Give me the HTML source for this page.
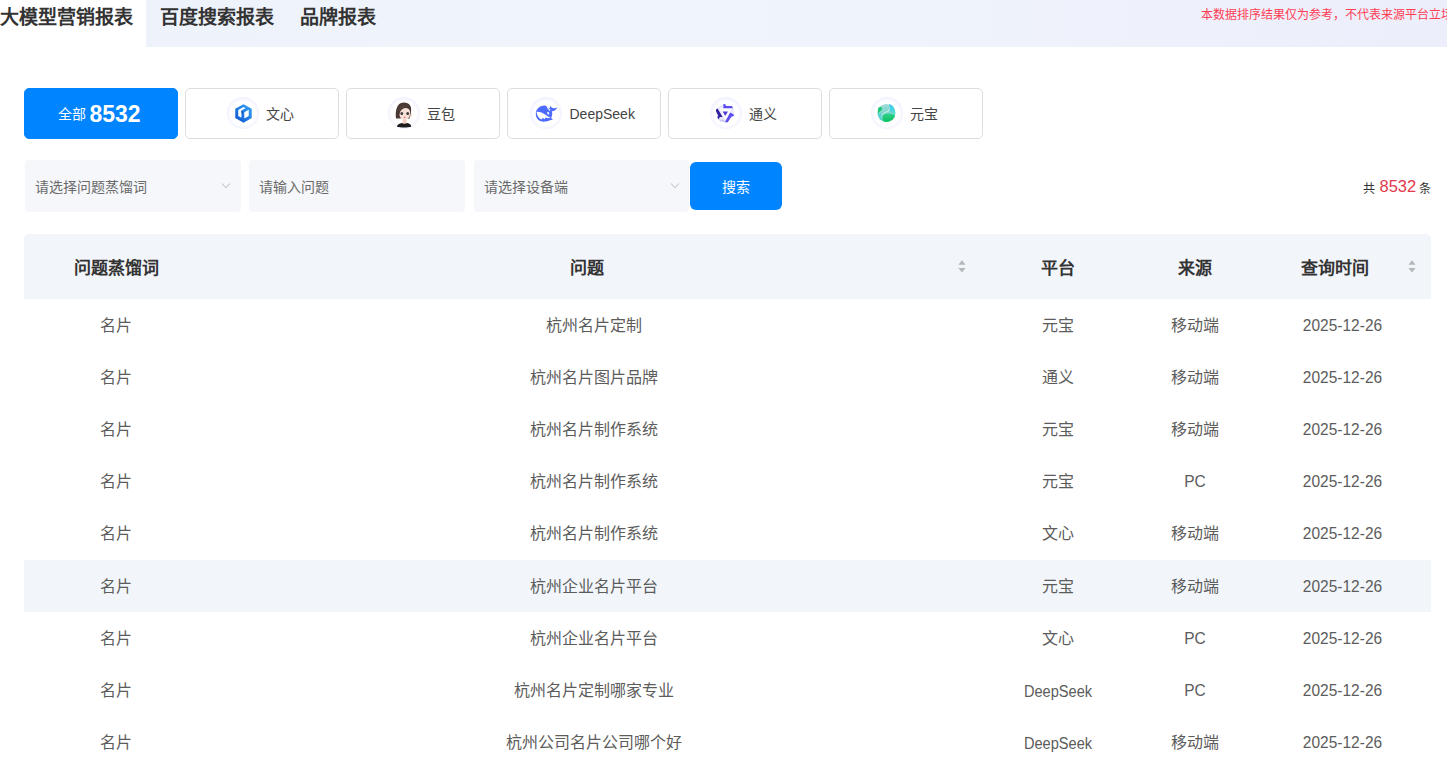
<!DOCTYPE html>
<html lang="zh-CN">
<head>
<meta charset="utf-8">
<style>
*{margin:0;padding:0;box-sizing:border-box;}
html,body{width:1447px;height:777px;overflow:hidden;background:#fff;}
body{font-family:"Liberation Sans",sans-serif;color:#333;position:relative;}
.topbar{position:absolute;left:146px;top:0;width:1301px;height:47px;background:linear-gradient(90deg,#eef2fa 0%,#f0f4fb 35%,#eff3fb 60%,#eceffb 100%);}
.tt{position:absolute;top:4.5px;font-size:19px;font-weight:bold;color:#333;line-height:26px;white-space:nowrap;}
.notice{position:absolute;left:1201px;top:6px;font-size:12px;color:#ff3d55;line-height:18px;white-space:nowrap;}
.tab{position:absolute;top:88px;width:154px;height:51px;border:1px solid #dedede;border-radius:5px;background:#fff;}
.tab.active{background:#0084ff;border-color:#0084ff;}
.ic{position:absolute;top:8px;width:32px;height:32px;border-radius:50%;background:radial-gradient(circle at 50% 51.5%,#fff 0,#fff 54%,#eff1ff 70%,#e6e9fd 84%,#edf0fe 93%,rgba(255,255,255,0) 100%);}
.logo{position:absolute;}
.lb{position:absolute;top:14px;font-size:14px;line-height:22px;color:#444;white-space:nowrap;}
.lb.la{font-size:14px;color:#444;transform-origin:0 50%;transform:scaleY(1.1);}
.sel{position:absolute;top:160px;height:52px;background:#f5f7fa;border-radius:4px;}
.ph{position:absolute;left:10px;top:16px;font-size:14px;line-height:22px;color:#6a6a6a;white-space:nowrap;}
.arr{position:absolute;top:182px;}
.btn{position:absolute;left:690px;top:162px;width:92px;height:48px;background:#0084ff;border-radius:6px;color:#fff;font-size:14px;line-height:22px;text-align:center;padding-top:14px;}
.total{position:absolute;left:1363px;top:178px;font-size:12px;line-height:22px;color:#333;white-space:nowrap;}
.total.n{color:#e0384c;font-size:16.5px;}
.thead{position:absolute;left:24px;top:234px;width:1407px;height:65px;background:#f2f5fa;border-radius:5px 5px 0 0;}
.row{position:absolute;left:24px;width:1407px;height:52.1px;}
.row.hov{background:#f2f6fa;}
.c{position:absolute;height:100%;text-align:center;white-space:nowrap;}
.thead .c{top:2px;font-size:17px;font-weight:bold;line-height:65px;color:#333;}
.row .c{top:1px;font-size:16px;line-height:52px;color:#5c5c5c;}
.row .la{font-size:15.5px;color:#5c5c5c;display:inline-block;transform:scaleY(1.08);}
.row .ds{font-size:14.6px;transform:scaleY(1.12);}
.c1{left:0;width:184px;}
.c2{left:184px;width:772px;}
.c3{left:956px;width:156px;}
.c4{left:1112px;width:118px;}
.c5{left:1230px;width:177px;}
.sorter{position:absolute;top:260px;}
</style>
</head>
<body>
<div class="topbar"></div>
<div class="tt" style="left:0;">大模型营销报表</div>
<div class="tt" style="left:160px;">百度搜索报表</div>
<div class="tt" style="left:300px;">品牌报表</div>
<div class="notice">本数据排序结果仅为参考，不代表来源平台立场</div>

<div class="tab active" style="left:24px;"></div>
<div class="abs" style="position:absolute;left:58px;top:104px;font-size:14px;line-height:20px;color:#fff;white-space:nowrap;">全部</div>
<div class="abs" style="position:absolute;left:89.5px;top:100px;font-size:23px;font-weight:bold;line-height:28px;color:#fff;white-space:nowrap;">8532</div>

<div class="tab" style="left:185px;"><div class="ic" style="left:41px;"><svg class="logo" style="left:7.5px;top:7px;" width="17" height="19" viewBox="0 0 34 38">
<defs><linearGradient id="wxg" x1="1" y1="0" x2="0" y2="1"><stop offset="0" stop-color="#3aa8f8"/><stop offset="1" stop-color="#0b52cf"/></linearGradient></defs>
<path d="M17 0.5 L33.5 9.5 L33.5 28 L17 37.5 L0.5 28 L0.5 9.5 Z" fill="url(#wxg)"/>
<path d="M6.5 12 L17 6.2 L21 8.4 L12.8 13 L12.8 27.6 L6.5 24.2 Z" fill="#fff"/>
<path d="M18.6 16.5 L27.5 11.6 L27.5 24.2 L18.6 29.2 Z" fill="#fff"/>
<path d="M12.8 13.5 L16 15.2 L16 19 L12.8 17.2 Z" fill="#0a3aa0" opacity="0.8"/>
</svg></div><div class="lb" style="left:80px;">文心</div></div>
<div class="tab" style="left:346px;"><div class="ic" style="left:41px;"><svg class="logo" style="left:-4px;top:-4px;" width="40" height="40" viewBox="0 0 40 40">
<path d="M12 25.6 C11.2 18.6 12.4 9.6 19.6 9.6 C25.8 9.6 27.8 13.6 27 18.6 L26.6 22 L25.2 25.8 L21 25 L15 25.6 Z" fill="#4a3834"/>
<path d="M15.4 18 C15.8 14.8 18.4 13.4 21 13.4 C23.8 13.4 25.9 15.4 26 19.2 C26.2 23 25 26.4 20.8 27.2 C17.6 26.8 15.6 24.6 15.4 21.6 Z" fill="#f8e0d9"/>
<path d="M14.4 21 C14.6 16.4 17.2 13 21.6 13 C24.8 13.2 26.6 15 26.8 18.4 C25.8 16.2 24 14.9 21.6 14.9 C18.4 15.1 16 17.6 15.4 21.6 Z" fill="#4a3834"/>
<ellipse cx="27.2" cy="22.2" rx="0.8" ry="1.2" fill="#f2cfc6"/>
<ellipse cx="17.8" cy="20.4" rx="1.4" ry="1.5" fill="#3a3a3a"/>
<ellipse cx="23.7" cy="20.5" rx="1.4" ry="1.5" fill="#3a3a3a"/>
<ellipse cx="20.7" cy="24.3" rx="1.1" ry="0.6" fill="#e8706e"/>
<path d="M18.6 26.4 L22.6 26.4 L22.8 31 L18.4 31 Z" fill="#f2d0c6"/>
<path d="M13 33.8 C13 31.4 15.4 30.4 18 30 C19 31 22 31 23.2 30 C25.6 30.4 27.2 31.4 27.2 33.8 C24 34.8 16 34.8 13 33.8 Z" fill="#1c1c1e"/>
</svg></div><div class="lb" style="left:80px;">豆包</div></div>
<div class="tab" style="left:507px;"><div class="ic" style="left:22px;"><svg class="logo" style="left:-4px;top:-4px;" width="40" height="40" viewBox="0 0 40 40">
<path d="M9.8 21 C9.8 16.2 13.4 12.8 18.4 12.6 C19.4 12.6 20.2 12.8 20.8 13.2 L22.4 14.6 C24.6 15.4 26 17.4 26.2 19.8 C26.4 21.8 25.8 23.6 25.2 25 L26.9 26.8 L24.6 27 C22.6 28.2 20 28.7 17.6 28.7 C13 28.7 9.8 25.4 9.8 21 Z" fill="#4d6bfe"/>
<path d="M23.4 17.6 C24 15.8 24 14.2 24.3 12.8 C25.4 14.6 26.6 15.4 28 15.3 C29 15.2 30.2 14.9 31.1 14.4 C30.6 16.2 29 17.6 26.8 18.2 Z" fill="#4d6bfe"/>
<path d="M10.5 18.9 C13.6 18.6 16.6 19.8 19.4 21.8 C21.2 23.1 22.8 24.1 24.6 24.7 L21.6 25.3 L19.6 24.4 L18.4 26.2 L16.8 24.8 L15.6 26.6 C13 25.4 10.9 22.6 10.5 18.9 Z" fill="#fff"/>
<ellipse cx="22.2" cy="20.2" rx="0.9" ry="1.4" transform="rotate(-30 22.2 20.2)" fill="#fff"/>
<path d="M20.4 12.8 C21 14.8 22.2 16.6 23.6 17.8 L24.6 17.2 C23.2 16 22.2 14.6 21.6 13.2 Z" fill="#fff"/>
</svg></div><div class="lb la" style="left:61.5px;top:13px;">DeepSeek</div></div>
<div class="tab" style="left:668px;"><div class="ic" style="left:41px;"><svg class="logo" style="left:-3.2px;top:-4px;" width="40" height="40" viewBox="0 0 40 40">
<path d="M16.4 11 L19.1 13 L24.8 13.1 L26.2 15.3 L27.4 21.9 L25.6 23.4 L20.2 29.2 L18.3 29.2 L16.7 26.8 L11.7 26.5 L10.2 24.1 L9 16.4 L10.4 15.5 L13.6 12.6 Z" fill="#e9e7fd"/>
<path d="M12.8 15.3 L25.4 15.3 L18.4 27 Z" fill="#fff"/>
<path d="M16.4 11 L18.3 11.2 L19.1 13 L24.8 13.1 L26.2 15.3 L16.4 15.3 Z" fill="#5b4cf2"/>
<path d="M9 16.4 L10.5 15.5 L15.6 23.9 L12.7 23.9 L11.8 26.4 L10.2 24.1 L11.4 23 L9 18.2 Z" fill="#2e1f9e"/>
<path d="M23.2 19.4 L27.3 21.9 L25.8 23.4 L24.4 23.6 L20.8 29.2 L17.9 29.2 Z" fill="#5b4cf2"/>
<path d="M11.8 26.4 L16.8 26.8 L18.4 29.2 L13.2 28.2 Z" fill="#c9c3f6"/>
<path d="M15.6 18.4 L21 18.4 L18.3 23 Z" fill="#4b3bd8"/>
</svg></div><div class="lb" style="left:80px;">通义</div></div>
<div class="tab" style="left:829px;"><div class="ic" style="left:41px;"><svg class="logo" style="left:-3px;top:-4px;" width="40" height="40" viewBox="0 0 40 40">
<defs>
<linearGradient id="ybg" x1="0.3" y1="0" x2="0.5" y2="1"><stop offset="0" stop-color="#a6dad8"/><stop offset="0.55" stop-color="#78d8cb"/><stop offset="1" stop-color="#3acd98"/></linearGradient>
<linearGradient id="ybc" x1="0" y1="0" x2="0.4" y2="1"><stop offset="0" stop-color="#30c4f6"/><stop offset="1" stop-color="#5fe0cf"/></linearGradient>
<linearGradient id="ybd" x1="0" y1="0" x2="0" y2="1"><stop offset="0" stop-color="#2fd08a"/><stop offset="1" stop-color="#0cc25f"/></linearGradient>
</defs>
<circle cx="18.3" cy="19.9" r="9" fill="url(#ybg)"/>
<path d="M21 11.1 C25 12 27.3 15.6 27.3 19.9 C27.3 21.2 27 22.2 26.6 23 C25.8 20.6 23.8 18.8 20.6 17.8 C22 15.8 22.2 13 21 11.1 Z" fill="url(#ybc)"/>
<path d="M10 21 C10.6 24 12 26.4 14.4 27.8 C13.4 25.6 13 23 13.4 21 Z" fill="#4fcde0" opacity="0.8"/>
<path d="M15.2 22.6 C16 21 18 20.4 20.2 20.8 C23 21.2 25.8 21.4 27.1 22.6 C26.4 26.2 22.8 28.9 18.3 28.9 C16.8 28.9 15.8 28.2 15.3 27.4 C14.6 25.8 14.6 23.8 15.2 22.6 Z" fill="url(#ybd)"/>
<path d="M10.6 14.6 C11.8 13.4 13.6 13.8 14 15.2 C14.3 16.4 13.6 17.2 12.8 17.8 C12 18.4 11.2 19.2 10.4 20.6 C9.6 19.2 9.8 16 10.6 14.6 Z" fill="#1bc872"/>
<path d="M21.2 13.2 C22 15.6 21 17.6 18.4 18.6 C16.2 19.4 14.2 20.6 13.4 22.6 C13 24 13.4 26 14.4 27.6 C13.2 25.2 13.2 22.6 14.8 21.2 C16 20.2 17.6 19.6 19.4 19 C21.8 18.2 22.8 16 21.2 13.2 Z" fill="#e2f6f1" opacity="0.85"/>
</svg></div><div class="lb" style="left:80px;">元宝</div></div>

<div class="sel" style="left:25px;width:216px;"><div class="ph">请选择问题蒸馏词</div></div>
<svg class="arr" style="left:221px;" width="10" height="8" viewBox="0 0 10 8"><path d="M1 1.5 L5 5.8 L9 1.5" fill="none" stroke="#c3c6cc" stroke-width="1.1"/></svg>
<div class="sel" style="left:249px;width:216px;"><div class="ph">请输入问题</div></div>
<div class="sel" style="left:474px;width:215px;"><div class="ph">请选择设备端</div></div>
<svg class="arr" style="left:670px;" width="10" height="8" viewBox="0 0 10 8"><path d="M1 1.5 L5 5.8 L9 1.5" fill="none" stroke="#c3c6cc" stroke-width="1.1"/></svg>
<div class="btn">搜索</div>
<div class="total" style="left:1363px;">共</div><div class="total n" style="left:1379.5px;top:174.5px;">8532</div><div class="total" style="left:1419px;">条</div>

<div class="thead">
  <div class="c c1">问题蒸馏词</div>
  <div class="c c2" style="left:177px;">问题</div>
  <div class="c c3">平台</div>
  <div class="c c4">来源</div>
  <div class="c c5" style="left:1222px;">查询时间</div>
</div>
<svg class="sorter" style="left:958px;" width="8" height="13" viewBox="0 0 8 13"><path d="M4 0.3 L7.6 4.8 L0.4 4.8 Z M0.4 8 L7.6 8 L4 12.5 Z" fill="#b4b6ba"/></svg>
<svg class="sorter" style="left:1408px;" width="8" height="13" viewBox="0 0 8 13"><path d="M4 0.3 L7.6 4.8 L0.4 4.8 Z M0.4 8 L7.6 8 L4 12.5 Z" fill="#b4b6ba"/></svg>
<div class="row" style="top:299.0px;"><div class="c c1">名片</div><div class="c c2">杭州名片定制</div><div class="c c3">元宝</div><div class="c c4">移动端</div><div class="c c5"><span class="la">2025-12-26</span></div></div>
<div class="row" style="top:351.1px;"><div class="c c1">名片</div><div class="c c2">杭州名片图片品牌</div><div class="c c3">通义</div><div class="c c4">移动端</div><div class="c c5"><span class="la">2025-12-26</span></div></div>
<div class="row" style="top:403.2px;"><div class="c c1">名片</div><div class="c c2">杭州名片制作系统</div><div class="c c3">元宝</div><div class="c c4">移动端</div><div class="c c5"><span class="la">2025-12-26</span></div></div>
<div class="row" style="top:455.3px;"><div class="c c1">名片</div><div class="c c2">杭州名片制作系统</div><div class="c c3">元宝</div><div class="c c4"><span class="la">PC</span></div><div class="c c5"><span class="la">2025-12-26</span></div></div>
<div class="row" style="top:507.4px;"><div class="c c1">名片</div><div class="c c2">杭州名片制作系统</div><div class="c c3">文心</div><div class="c c4">移动端</div><div class="c c5"><span class="la">2025-12-26</span></div></div>
<div class="row hov" style="top:559.5px;"><div class="c c1">名片</div><div class="c c2">杭州企业名片平台</div><div class="c c3">元宝</div><div class="c c4">移动端</div><div class="c c5"><span class="la">2025-12-26</span></div></div>
<div class="row" style="top:611.6px;"><div class="c c1">名片</div><div class="c c2">杭州企业名片平台</div><div class="c c3">文心</div><div class="c c4"><span class="la">PC</span></div><div class="c c5"><span class="la">2025-12-26</span></div></div>
<div class="row" style="top:663.7px;"><div class="c c1">名片</div><div class="c c2">杭州名片定制哪家专业</div><div class="c c3"><span class="la ds">DeepSeek</span></div><div class="c c4"><span class="la">PC</span></div><div class="c c5"><span class="la">2025-12-26</span></div></div>
<div class="row" style="top:715.8px;"><div class="c c1">名片</div><div class="c c2">杭州公司名片公司哪个好</div><div class="c c3"><span class="la ds">DeepSeek</span></div><div class="c c4">移动端</div><div class="c c5"><span class="la">2025-12-26</span></div></div>
</body>
</html>
